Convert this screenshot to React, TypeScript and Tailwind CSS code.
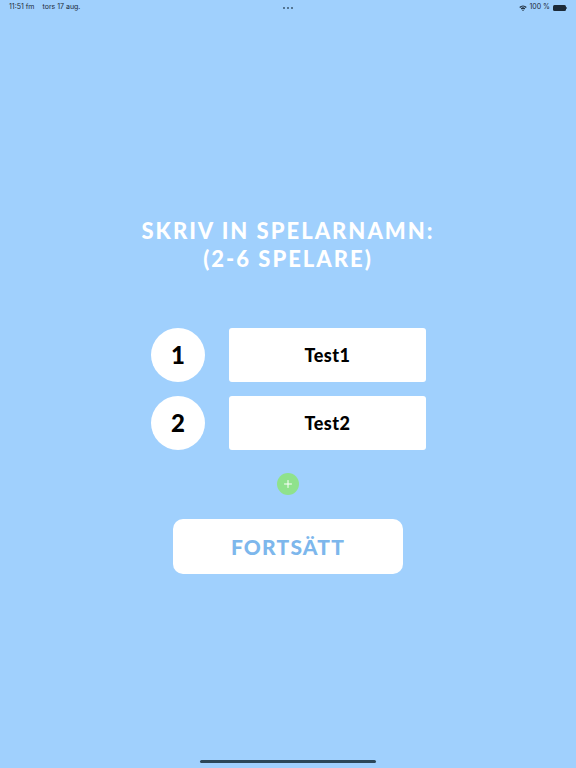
import { Plus } from "lucide-react";

const players = ["Test1", "Test2"];

const StatusBar = () => (
  <div className="flex h-[15px] items-center justify-between px-[9px] text-[7px] text-[#1c2a38] font-['Inter',sans-serif]">
    <div className="flex w-[120px] gap-[8px]">
      <span>11:51 fm</span>
      <span>tors 17 aug.</span>
    </div>
    <div className="flex gap-[2px]">
      <span className="h-[2px] w-[2px] rounded-full bg-[#3b5870]" />
      <span className="h-[2px] w-[2px] rounded-full bg-[#3b5870]" />
      <span className="h-[2px] w-[2px] rounded-full bg-[#3b5870]" />
    </div>
    <div className="flex w-[120px] items-center justify-end gap-[2px]">
      <svg width="8" height="6" viewBox="0 0 8 6">
        <path d="M0.3 2 A5.2 5.2 0 0 1 7.7 2 L6.8 2.9 A4 4 0 0 0 1.2 2.9 Z" fill="#1c2a38" />
        <path d="M1.8 3.5 A3 3 0 0 1 6.2 3.5 L5.3 4.4 A1.8 1.8 0 0 0 2.7 4.4 Z" fill="#1c2a38" />
        <circle cx="4" cy="5.3" r="0.7" fill="#1c2a38" />
      </svg>
      <span>100 %</span>
      <div className="ml-[1px] flex items-center">
        <div className="h-[6px] w-[13px] rounded-[1.5px] bg-[#1c2a38]" />
        <div className="h-[2px] w-[1px] bg-[#1c2a38]/60" />
      </div>
    </div>
  </div>
);

export default function App() {
  return (
    <div className="flex h-[768px] w-full flex-col bg-[#a0d0fd] font-['Lato',sans-serif]">
      <StatusBar />
      <main className="flex flex-1 flex-col items-center">
        <h1 className="mt-[202px] text-center text-[22px] font-black leading-[28px] tracking-[2px] text-white">
          SKRIV IN SPELARNAMN:
          <br />
          (2-6 SPELARE)
        </h1>
        <div className="mt-[55px] flex flex-col gap-[14px] pl-[1px]">
          {players.map((name, i) => (
            <div key={name} className="flex items-center gap-[24px]">
              <div className="flex h-[54px] w-[54px] items-center justify-center rounded-full bg-white text-[24px] font-black text-black">
                {i + 1}
              </div>
              <div className="flex h-[54px] w-[197px] items-center justify-center rounded-[3px] bg-white text-[18px] font-black tracking-[0.5px] text-black">
                {name}
              </div>
            </div>
          ))}
        </div>
        <button className="mt-[23px] flex h-[22px] w-[22px] items-center justify-center rounded-full bg-[#8fe28c] text-white">
          <Plus size={12} strokeWidth={2} />
        </button>
        <button className="mt-[24px] flex h-[55px] w-[230px] items-center justify-center rounded-[10px] bg-white text-[21px] font-black tracking-[1.2px] text-[#7db7ec]">
          FORTSÄTT
        </button>
        <div className="mt-auto mb-[5px] h-[3px] w-[176px] rounded-full bg-[#2b4658]" />
      </main>
    </div>
  );
}
